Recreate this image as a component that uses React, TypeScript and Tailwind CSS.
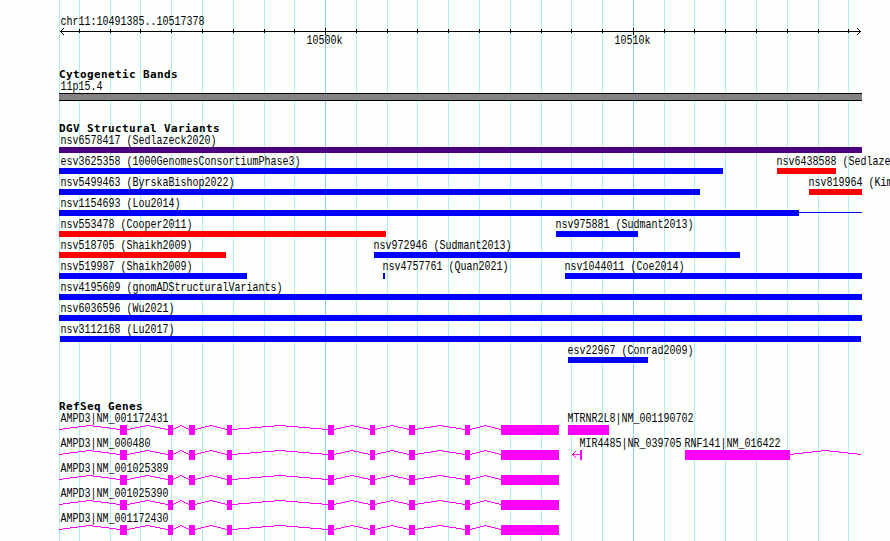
type Feature = {
  name: string
  start: number
  end: number
  color: string
  tail?: number
}

type Gene = {
  name: string
  start: number
  exons: [number, number][]
  end: number
  labelAt: number
  arrow?: boolean
}

const LEFT = 59
const RIGHT = 862

const BLUE = 'bg-[#0000ff]'
const RED = 'bg-[#ff0000]'
const INDIGO = 'bg-[#4b0082]'

const minorTicks = [
  79, 110, 140, 171, 202, 233, 264, 294, 356, 387, 417, 448, 479, 510, 541, 571, 602, 664, 694, 725,
  756, 787, 818, 848,
]
const majorTicks = [
  { x: 325, label: '10500k' },
  { x: 633, label: '10510k' },
]

const variants: Feature[][] = [
  [{ name: 'nsv6578417 (Sedlazeck2020)', start: 59, end: 862, color: INDIGO }],
  [
    { name: 'esv3625358 (1000GenomesConsortiumPhase3)', start: 59, end: 723, color: BLUE },
    { name: 'nsv6438588 (Sedlaze', start: 777, end: 836, color: RED },
  ],
  [
    { name: 'nsv5499463 (ByrskaBishop2022)', start: 59, end: 700, color: BLUE },
    { name: 'nsv819964 (Kim', start: 809, end: 862, color: RED },
  ],
  [{ name: 'nsv1154693 (Lou2014)', start: 59, end: 799, color: BLUE, tail: 862 }],
  [
    { name: 'nsv553478 (Cooper2011)', start: 59, end: 386, color: RED },
    { name: 'nsv975881 (Sudmant2013)', start: 556, end: 638, color: BLUE },
  ],
  [
    { name: 'nsv518705 (Shaikh2009)', start: 59, end: 226, color: RED },
    { name: 'nsv972946 (Sudmant2013)', start: 374, end: 740, color: BLUE },
  ],
  [
    { name: 'nsv519987 (Shaikh2009)', start: 59, end: 247, color: BLUE },
    { name: 'nsv4757761 (Quan2021)', start: 383, end: 385, color: BLUE },
    { name: 'nsv1044011 (Coe2014)', start: 565, end: 862, color: BLUE },
  ],
  [{ name: 'nsv4195609 (gnomADStructuralVariants)', start: 59, end: 862, color: BLUE }],
  [{ name: 'nsv6036596 (Wu2021)', start: 59, end: 862, color: BLUE }],
  [{ name: 'nsv3112168 (Lu2017)', start: 60, end: 861, color: BLUE }],
  [{ name: 'esv22967 (Conrad2009)', start: 568, end: 648, color: BLUE }],
]

const ampd3Exons: [number, number][] = [
  [120, 127],
  [168, 173],
  [189, 195],
  [227, 232],
  [328, 334],
  [370, 375],
  [409, 415],
  [465, 470],
  [501, 559],
]

const ampd3 = (accession: string): Gene => ({
  name: `AMPD3|${accession}`,
  start: 59,
  exons: ampd3Exons,
  end: 559,
  labelAt: 60.5,
})

const genes: Gene[][] = [
  [
    ampd3('NM_001172431'),
    { name: 'MTRNR2L8|NM_001190702', start: 568, exons: [[568, 609]], end: 609, labelAt: 567.5 },
  ],
  [
    ampd3('NM_000480'),
    { name: 'MIR4485|NR_039705', start: 580, exons: [[580, 582]], end: 582, labelAt: 579.5, arrow: true },
    { name: 'RNF141|NM_016422', start: 685, exons: [[685, 790]], end: 861, labelAt: 684.5 },
  ],
  [ampd3('NM_001025389')],
  [ampd3('NM_001025390')],
  [ampd3('NM_001172430')],
]

function Label({ text, x }: { text: string; x: number }) {
  return (
    <div
      className="col-start-1 row-start-1 h-[15px] origin-[0_13px] scale-y-[1.22] whitespace-pre text-[10px] leading-[19px]"
      style={{ marginLeft: x }}
    >
      {text}
    </div>
  )
}

function Heading({ children }: { children: string }) {
  return (
    <h2 className="h-3.5 pl-[59px] font-['DejaVu_Sans_Mono',monospace] text-[11px] font-bold leading-4 tracking-[0.378px]">
      {children}
    </h2>
  )
}

function GridLines() {
  return (
    <svg className="absolute inset-0 -z-10" width="890" height="541" shapeRendering="crispEdges">
      {[LEFT, ...minorTicks].map((x) => (
        <rect key={x} x={x} y="0" width="1" height="541" fill="#afeeee" />
      ))}
      {majorTicks.map(({ x }) => (
        <rect key={x} x={x} y="0" width="1" height="541" fill="#87ceeb" />
      ))}
    </svg>
  )
}

function Ruler() {
  return (
    <header className="h-[67px] pt-[13px]">
      <div className="grid h-[15px]">
        <Label text="chr11:10491385..10517378" x={60.5} />
      </div>
      <svg className="block" width="890" height="7" shapeRendering="crispEdges">
        <rect x="60" y="3" width="801" height="1" />
        <path d="M63 0h1v1h-1v1h-1v1h-1v1h1v1h1v1h1v1h-1v-1h-1v-1h-1v-1h-1v-1h1v-1h1v-1h1z" />
        <path d="M857 0h1v1h1v1h1v1h1v1h-1v1h-1v1h-1v1h-1v-1h1v-1h1v-1h1v-1h-1v-1h-1v-1h-1z" />
        {minorTicks.map((x) => (
          <rect key={x} x={x} y="1" width="1" height="4" />
        ))}
        {majorTicks.map(({ x }) => (
          <rect key={x} x={x} y="0" width="1" height="7" />
        ))}
      </svg>
      <div className="-mt-[3px] grid">
        {majorTicks.map(({ x, label }) => (
          <Label key={x} text={label} x={x - 18.5} />
        ))}
      </div>
    </header>
  )
}

function VariantRow({ features }: { features: Feature[] }) {
  return (
    <div className="grid h-[21px] w-[890px] grid-cols-[890px] grid-rows-[15px_6px]">
      {features.map((f) => (
        <div key={f.name} className="contents">
          <Label text={f.name} x={f.start <= 60 ? 60.5 : f.start - 0.5} />
          <div
            className={`col-start-1 row-start-2 h-1.5 ${f.color}`}
            style={{ marginLeft: f.start, width: f.end - f.start }}
          />
          {f.tail && (
            <div
              className={`col-start-1 row-start-2 mt-0.5 h-px ${f.color}`}
              style={{ marginLeft: f.end, width: f.tail - f.end }}
            />
          )}
        </div>
      ))}
    </div>
  )
}

// Introns rise 4px to the midpoint between two exons and fall back again
function introns(gene: Gene) {
  const edges = [gene.start, ...gene.exons.flat(), gene.end]
  const spans: [number, number][] = []
  for (let i = 0; i < edges.length; i += 2) {
    if (edges[i + 1] > edges[i]) spans.push([edges[i], edges[i + 1]])
  }
  return spans
}

function intronSteps([a, b]: [number, number]) {
  const half = (b - a) / 2
  const columns = Array.from({ length: b - a }, (_, i) => {
    const climb = 1 - Math.abs(i + 0.5 - half) / half
    return Math.round(climb * 4)
  })
  const runs: { x: number; y: number; w: number }[] = []
  columns.forEach((rise, i) => {
    const last = runs[runs.length - 1]
    if (last && last.y === 4 - rise) last.w += 1
    else runs.push({ x: a + i, y: 4 - rise, w: 1 })
  })
  return runs
}

function GeneRow({ row }: { row: Gene[] }) {
  return (
    <div className="h-[25px]">
      <div className="grid h-[15px] grid-cols-[890px]">
        {row.map((g) => (
          <Label key={g.name} text={g.name} x={g.labelAt} />
        ))}
      </div>
      <svg className="block" width="890" height="10" fill="#ff00ff" shapeRendering="crispEdges">
        {row.map((g) => (
          <g key={g.name}>
            {introns(g).flatMap(intronSteps).map((r) => (
              <rect key={r.x} x={r.x} y={r.y} width={r.w} height="1" />
            ))}
            {g.exons.map(([a, b]) => (
              <rect key={a} x={a} y="0" width={b - a} height="10" />
            ))}
            {g.arrow && (
              <path d="M572 4h1v-1h1v-1h1v-1h1v1h-1v1h-1v1h6v1h-6v1h1v1h1v1h-1v-1h-1v-1h-1v-1h-1z" />
            )}
          </g>
        ))}
      </svg>
    </div>
  )
}

export default function App() {
  return (
    <main className="relative isolate h-[541px] w-[890px] overflow-hidden bg-[#fcfffc] font-['Liberation_Mono',monospace] text-black">
      <GridLines />
      <Ruler />
      <section className="h-[54px]">
        <Heading>Cytogenetic Bands</Heading>
        <div className="-mt-[3px] grid h-[15px]">
          <Label text="11p15.4" x={60.5} />
        </div>
        <div
          className="h-2 border-y border-black bg-[#848184]"
          style={{ marginLeft: LEFT, width: RIGHT - LEFT }}
        />
      </section>
      <section className="h-[278px]">
        <Heading>DGV Structural Variants</Heading>
        <div className="-mt-[3px]">
          {variants.map((features) => (
            <VariantRow key={features[0].name} features={features} />
          ))}
        </div>
      </section>
      <section>
        <Heading>RefSeq Genes</Heading>
        <div className="-mt-[3px]">
          {genes.map((row) => (
            <GeneRow key={row[0].name} row={row} />
          ))}
        </div>
      </section>
    </main>
  )
}
